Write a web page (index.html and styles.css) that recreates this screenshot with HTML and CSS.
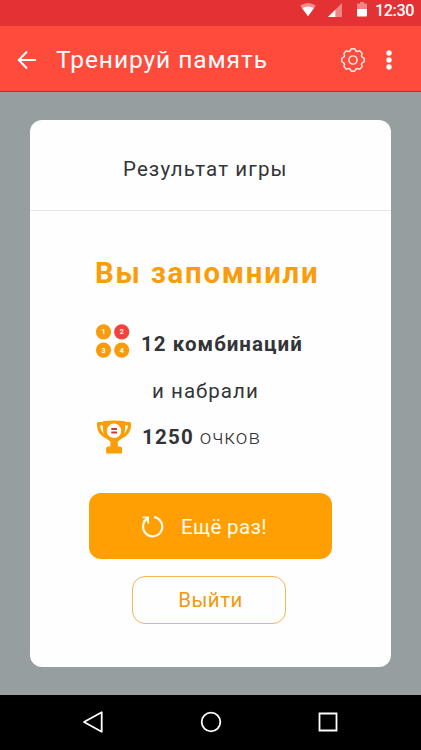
FILE: index.html
```html
<!DOCTYPE html>
<html lang="ru">
<head>
<meta charset="utf-8">
<title>Тренируй память</title>
<link rel="stylesheet" href="styles.css">
</head>
<body>
<div class="screen">
  <div class="status">
    <svg class="wifi" width="18" height="16" viewBox="0 0 18 16"><path d="M1.2 3.6Q9 -1.6 16.8 3.6L9 14.2Z" fill="#f28d8b"/><path d="M3 6Q9 2.8 15 6L9 14.2Z" fill="#fff"/></svg>
    <svg class="signal" width="14" height="14" viewBox="0 0 14 14"><path d="M14 0V14H0Z" fill="#f08583"/><path d="M7.3 6.7V14H0Z" fill="#fff"/></svg>
    <svg class="battery" width="10" height="15" viewBox="0 0 10 15"><path d="M0 7V2.6Q0 1.6 1 1.6H3V0H7V1.6H9Q10 1.6 10 2.6V7Z" fill="#f08583"/><path d="M0 7H10V13.5Q10 14.5 9 14.5H1Q0 14.5 0 13.5Z" fill="#fff"/></svg>
    <span class="clock">12:30</span>
  </div>
  <header class="bar">
    <svg class="back" width="20" height="20" viewBox="0 0 20 20"><path d="M19 10H2M10 1.5L1.8 10L10 18.5" fill="none" stroke="#fff" stroke-width="2"/></svg>
    <h1 class="bar-title">Тренируй память</h1>
    <svg class="gear" width="26" height="26" viewBox="-13 -13 26 26" fill="none" stroke="#fff0ec" stroke-width="1.4" stroke-linejoin="round" stroke-linecap="round">
      <defs><path id="tooth" d="M-3.6 -8.7Q-2.7 -8.9 -2.4 -10Q-2.2 -11.2 -1.5 -11.2H1.5Q2.2 -11.2 2.4 -10Q2.7 -8.9 3.6 -8.7"/></defs>
      <use href="#tooth"/><use href="#tooth" transform="rotate(45)"/><use href="#tooth" transform="rotate(90)"/><use href="#tooth" transform="rotate(135)"/><use href="#tooth" transform="rotate(180)"/><use href="#tooth" transform="rotate(225)"/><use href="#tooth" transform="rotate(270)"/><use href="#tooth" transform="rotate(315)"/>
      <circle r="4.1"/>
    </svg>
    <svg class="more" width="6" height="20" viewBox="0 0 6 20" fill="#fff"><circle cx="3" cy="3" r="2.7"/><circle cx="3" cy="10" r="2.7"/><circle cx="3" cy="17" r="2.7"/></svg>
  </header>
  <main class="stage">
    <section class="card">
      <h2 class="card-title">Результат игры</h2>
      <div class="headline">Вы запомнили</div>
      <div class="row combos">
        <svg class="dots" width="36" height="35" viewBox="0 0 36 35">
          <circle cx="8.5" cy="7.8" r="7.6" fill="#f99c0b"/><circle cx="26.7" cy="7.8" r="7.6" fill="#f4433c"/><circle cx="8.5" cy="26.2" r="7.6" fill="#f99c0b"/><circle cx="26.7" cy="26.2" r="7.6" fill="#f99c0b"/>
          <g class="dot-num"><text x="8.5" y="10.4">1</text><text x="26.7" y="10.4">2</text><text x="8.5" y="28.8">3</text><text x="26.7" y="28.8">4</text></g>
        </svg>
        <b class="combo-text">12 комбинаций</b>
      </div>
      <div class="and">и набрали</div>
      <div class="row points">
        <svg class="cup" width="36" height="34" viewBox="0 0 36 34">
          <path d="M9 3.6H2.5Q2.2 13.6 11 17.2M27 3.6H33.5Q33.8 13.6 25 17.2" fill="none" stroke="#fb9d05" stroke-width="3.2" stroke-linejoin="round"/>
          <path d="M6.8 1.2Q18 -.2 29.2 1.2Q30.5 17.5 21.8 21.5V26.5H24Q26 26.5 26 28.5V33.4H10.2V28.5Q10.2 26.5 12.2 26.5H14.4V21.5Q5.5 17.5 6.8 1.2Z" fill="#fb9d05"/>
          <circle cx="18" cy="10.8" r="7.2" fill="#fff"/><path d="M15.3 9H21M15.3 12.5H21" stroke="#d93535" stroke-width="1.9"/>
        </svg>
        <b class="score">1250</b><span class="unit">очков</span>
      </div>
      <button class="again">
        <svg class="reload" width="24" height="24" viewBox="0 0 24 24" fill="none" stroke="#fffbe9" stroke-width="2.2"><path d="M13 2.2A9.6 9.6 0 1 1 6.2 3.8"/><path d="M1.5 2.4H7.1V8.6M2.6 6.4L7 2.6" stroke-width="1.9"/></svg>
        <span class="again-text">Ещё раз!</span>
      </button>
      <button class="exit">Выйти</button>
    </section>
  </main>
  <nav class="nav">
    <svg width="22" height="24" viewBox="0 0 22 24"><path d="M19.7 2.2V21.8L2 12Z" fill="none" stroke="#fff" stroke-width="1.8" stroke-linejoin="round"/></svg>
    <svg width="22" height="22" viewBox="0 0 22 22"><circle cx="11" cy="11" r="9.3" fill="none" stroke="#fff" stroke-width="1.8"/></svg>
    <svg width="20" height="20" viewBox="0 0 20 20"><path d="M1.5 1.5H18.5V18.5H1.5Z" fill="none" stroke="#fff" stroke-width="1.8"/></svg>
  </nav>
</div>
</body>
</html>
```
FILE: styles.css
```css
* { box-sizing: border-box; }
body { margin: 0; font-family: Roboto, "Liberation Sans", sans-serif; color: #333438; }
h1, h2 { margin: 0; font-weight: 400; }
svg { display: block; flex: none; }
button { font: inherit; padding: 0; }
.screen { width: 421px; height: 750px; display: flex; flex-direction: column; overflow: hidden; background: #969e9f; }
.status { height: 26px; flex: none; background: #e43133; display: flex; align-items: flex-start; padding-left: 299px; color: #fff; }
.wifi { margin-top: 2px; }
.signal { margin: 3px 0 0 11px; }
.battery { margin: 2px 0 0 15px; }
.clock { margin-left: 8px; font-size: 16.2px; line-height: 22px; font-weight: 500; letter-spacing: -0.4px; }
.bar { height: 66px; flex: none; background: #fe4b3b; border-bottom: 1px solid #a63a31; display: flex; align-items: center; padding: 2px 0 0 17px; color: #fff; }
.bar-title { width: 284px; margin-left: 19px; font-size: 24.5px; line-height: 40px; letter-spacing: .93px; white-space: nowrap; }
.gear { margin-left: -.5px; }
.more { margin-left: 20.5px; }
.stage { flex: 1; padding: 28px 30px; }
.card { width: 361px; height: 547px; background: #fefefe; border-radius: 12px; display: flex; flex-direction: column; }
.card-title { height: 91px; flex: none; border-bottom: 1px solid #e6e6e6; padding: 37px 0 0 93px; font-size: 20.5px; line-height: 24px; letter-spacing: 1.1px; }
.headline { margin: 43px 0 0 65px; font-size: 29.3px; line-height: 38px; font-weight: 700; letter-spacing: 1.8px; color: #fb9c0b; white-space: nowrap; }
.row { display: flex; align-items: flex-start; padding-left: 65px; }
.combos { height: 36px; margin-top: 32px; }
.dot-num { font-size: 7px; font-weight: 700; fill: #fff; text-anchor: middle; }
.combo-text { margin: 8px 0 0 10px; font-size: 20.5px; line-height: 24px; letter-spacing: 1.05px; white-space: nowrap; }
.and { margin: 19px 0 0 122px; font-size: 20.5px; line-height: 24px; letter-spacing: 1.05px; }
.points { height: 34px; margin-top: 17px; padding-left: 66px; }
.score { margin: 5px 0 0 10px; font-size: 20.5px; line-height: 24px; letter-spacing: 1.2px; }
.unit { margin: 5px 0 0 6px; font-size: 20.5px; line-height: 24px; font-weight: 300; letter-spacing: 1.05px; }
.again { width: 243px; height: 66px; margin: 39px 0 0 59px; border: 0; border-radius: 12px; background: #ff9f03; color: #fffbe9; display: flex; align-items: center; padding: 2px 0 0 52px; }
.again-text { margin-left: 16px; font-size: 20.5px; line-height: 24px; letter-spacing: .35px; }
.exit { width: 154px; height: 48px; margin: 17px 0 0 102px; border: 1px solid #f3b45a; border-radius: 13px; background: transparent; color: #f3990f; padding-left: 3px; font-size: 20.5px; line-height: 24px; letter-spacing: .5px; }
.nav { height: 56px; flex: none; background: #000; display: flex; align-items: center; justify-content: space-between; padding: 0 83px 2px 82px; }
```
